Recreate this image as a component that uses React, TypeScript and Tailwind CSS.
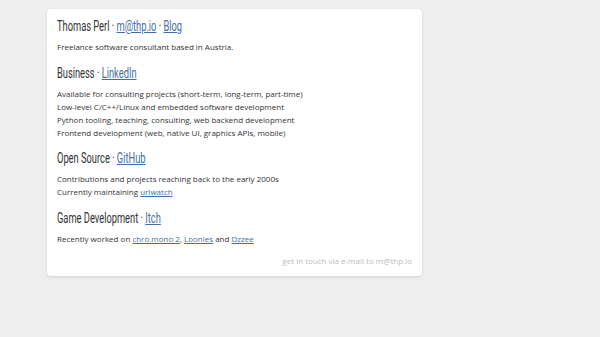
function Heading({ children, first }: { children: React.ReactNode; first?: boolean }) {
  return (
    <h2
      className={
        "h-[14px] leading-[14px] mb-[7px] whitespace-nowrap " + (first ? "" : "mt-[12.5px]")
      }
    >
      <span
        className="inline-block origin-left scale-x-[0.62] text-[15px] font-normal text-[#333]"
        style={{ fontFamily: "Roboto, sans-serif" }}
      >
        {children}
      </span>
    </h2>
  );
}

export default function App() {
  const link = "text-[#3f6fa6] underline";
  return (
    <div className="min-h-screen bg-[#eeeeee] pt-[9px] pl-[47px]">
      <div
        className="w-[375px] bg-white rounded-[4px] shadow-[0_1px_3px_rgba(0,0,0,0.12)] px-[10px] pt-[10px] pb-[9px] text-[#333] text-[8px] leading-[13px]"
        style={{ fontFamily: '"Open Sans", sans-serif' }}
      >
        <Heading first>
          Thomas Perl · <a className={link}>m@thp.io</a> · <a className={link}>Blog</a>
        </Heading>
        <p>Freelance software consultant based in Austria.</p>

        <Heading>
          Business · <a className={link}>LinkedIn</a>
        </Heading>
        <p>Available for consulting projects (short-term, long-term, part-time)</p>
        <p>Low-level C/C++/Linux and embedded software development</p>
        <p>Python tooling, teaching, consulting, web backend development</p>
        <p>Frontend development (web, native UI, graphics APIs, mobile)</p>

        <Heading>
          Open Source · <a className={link}>GitHub</a>
        </Heading>
        <p>Contributions and projects reaching back to the early 2000s</p>
        <p>
          Currently maintaining <a className={link}>urlwatch</a>
        </p>

        <Heading>
          Game Development · <a className={link}>Itch</a>
        </Heading>
        <p>
          Recently worked on <a className={link}>chro.mono 2</a>, <a className={link}>Loonies</a> and{" "}
          <a className={link}>Dzzee</a>
        </p>

        <p className="text-right text-[#bbbbbb] mt-[9px]">get in touch via e-mail to m@thp.io</p>
      </div>
    </div>
  );
}
